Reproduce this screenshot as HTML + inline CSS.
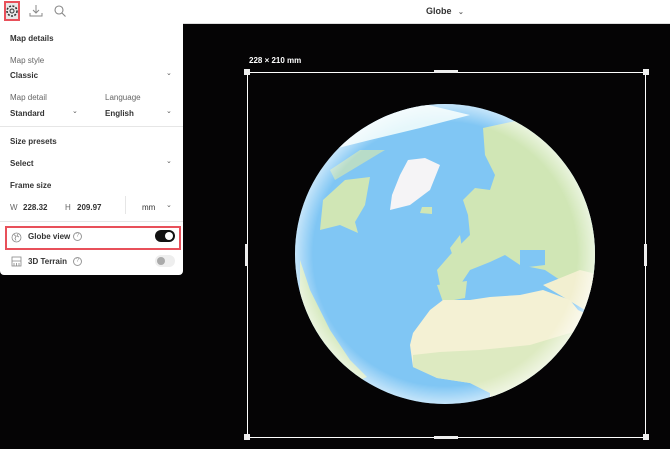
<!DOCTYPE html>
<html><head><style>
body{margin:0;width:670px;height:449px;overflow:hidden;background:#050405;font-family:"Liberation Sans",sans-serif;position:relative}
.top{position:absolute;left:0;top:0;width:670px;height:23px;background:#fff;border-bottom:1px solid #ddd}
.panel{position:absolute;left:0;top:23px;width:183px;height:252px;background:#fff;border-radius:0 0 4px 4px;font-size:8px;color:#333}
.panel div{position:absolute}
.lbl{color:#666}
.b{font-weight:bold;color:#333}
.chev{color:#555;font-size:7px}
.hr{height:1px;background:#e6e6e6;left:0;width:183px}
</style></head><body>
<div class="top">
 <div style="position:absolute;left:4px;top:1px;width:16px;height:20px;background:#e8e8e8;border:2px solid #e8505a;box-sizing:border-box"></div>
 <svg style="position:absolute;left:5px;top:4px" width="14" height="14" viewBox="0 0 14 14"><circle cx="7" cy="7" r="2" fill="none" stroke="#333" stroke-width="1"/><circle cx="7" cy="7" r="5" fill="none" stroke="#333" stroke-width="1.6" stroke-dasharray="2 1.4"/></svg>
 <svg style="position:absolute;left:29px;top:4px" width="14" height="14" viewBox="0 0 14 14" fill="none" stroke="#888" stroke-width="1"><path d="M7 1v8M4 6l3 3 3-3M1 9v3h12V9"/></svg>
 <svg style="position:absolute;left:53px;top:4px" width="14" height="14" viewBox="0 0 14 14" fill="none" stroke="#888" stroke-width="1.1"><circle cx="6" cy="6" r="4"/><path d="M9 9l3.5 3.5"/></svg>
 <div style="position:absolute;left:426px;top:6px;font-size:9px;font-weight:bold;color:#333">Globe <span style="font-size:7px;color:#666;margin-left:4px">⌄</span></div>
</div>
<div class="panel">
 <div class="b" style="left:10px;top:11px">Map details</div>
 <div class="lbl" style="left:10px;top:33px">Map style</div>
 <div class="b" style="left:10px;top:48px">Classic</div><div class="chev" style="left:166px;top:46px">⌄</div>
 <div class="lbl" style="left:10px;top:70px">Map detail</div>
 <div class="lbl" style="left:105px;top:70px">Language</div>
 <div class="b" style="left:10px;top:86px">Standard</div><div class="chev" style="left:72px;top:84px">⌄</div>
 <div class="b" style="left:105px;top:86px">English</div><div class="chev" style="left:166px;top:84px">⌄</div>
 <div class="hr" style="top:103px"></div>
 <div class="b" style="left:10px;top:114px">Size presets</div>
 <div class="b" style="left:10px;top:136px">Select</div><div class="chev" style="left:166px;top:134px">⌄</div>
 <div class="b" style="left:10px;top:158px">Frame size</div>
 <div class="lbl" style="left:10px;top:180px">W</div><div class="b" style="left:23px;top:180px">228.32</div>
 <div class="lbl" style="left:65px;top:180px">H</div><div class="b" style="left:77px;top:180px">209.97</div>
 <div style="left:125px;top:173px;width:1px;height:18px;background:#e6e6e6"></div>
 <div class="b" style="left:142px;top:180px;font-weight:normal">mm</div><div class="chev" style="left:166px;top:178px">⌄</div>
 <div class="hr" style="top:198px"></div>
 <div style="left:5px;top:203px;width:176px;height:24px;border:2px solid #e8505a;box-sizing:border-box"></div>
 <svg style="position:absolute;left:11px;top:209px" width="11" height="11" viewBox="0 0 11 11" fill="none" stroke="#888" stroke-width=".8"><circle cx="5.5" cy="5.5" r="4.5"/><path d="M3 2.5l2 2-1 2 1 2M7 2l-1 2 2 1"/></svg>
 <div class="b" style="left:28px;top:209px">Globe view</div>
 <div style="left:73px;top:209px;width:7px;height:7px;border:1px solid #999;border-radius:50%;font-size:6px;color:#999;text-align:center;line-height:7px">?</div>
 <div style="left:155px;top:207px;width:20px;height:12px;background:#111;border-radius:6px"><div style="left:10px;top:2px;width:8px;height:8px;border-radius:50%;background:#fff"></div></div>
 <svg style="position:absolute;left:11px;top:233px" width="11" height="11" viewBox="0 0 11 11" fill="none" stroke="#888" stroke-width=".8"><rect x="1" y="1" width="9" height="9"/><path d="M1 5h9M3 7v3M5.5 7v3M8 7v3"/></svg>
 <div class="b" style="left:28px;top:234px">3D Terrain</div>
 <div style="left:73px;top:234px;width:7px;height:7px;border:1px solid #999;border-radius:50%;font-size:6px;color:#999;text-align:center;line-height:7px">?</div>
 <div style="left:155px;top:232px;width:20px;height:12px;background:#eee;border-radius:6px"><div style="left:2px;top:2px;width:8px;height:8px;border-radius:50%;background:#aaa"></div></div>
</div>
<div style="position:absolute;left:249px;top:56px;font-size:8px;font-weight:bold;color:#fff">228 × 210 mm</div>
<svg style="position:absolute;left:0;top:0" width="670" height="449">
 <defs><clipPath id="c"><circle cx="445" cy="254" r="150"/></clipPath>
 <radialGradient id="rim" cx="445" cy="254" r="150" gradientUnits="userSpaceOnUse"><stop offset=".88" stop-color="#fff" stop-opacity="0"/><stop offset="1" stop-color="#fff" stop-opacity=".55"/></radialGradient></defs>
 <circle cx="445" cy="254" r="150" fill="#80c6f4"/>
 <g clip-path="url(#c)">
  <path d="M340 108 L420 103 L470 115 L420 128 L370 140 L330 150 Z" fill="#e6f7fb"/>
  <path d="M483 128 L520 120 L580 150 L600 200 L600 290 L580 295 L560 280 L545 270 L520 265 L505 255 L490 262 L470 270 L460 285 L440 285 L437 270 L450 255 L460 245 L470 235 L468 215 L463 200 L475 188 L490 190 L495 175 L485 155 Z" fill="#d0e6b5"/>
  <path d="M520 250 L545 250 L545 265 L520 268 Z" fill="#80c6f4"/>
  <path d="M437 285 L467 281 L465 298 L443 302 Z" fill="#d0e6b5"/>
  <path d="M450 248 L460 235 L463 255 L455 262 Z" fill="#d0e6b5"/>
  <path d="M543 285 L580 270 L600 275 L600 320 L585 310 Z" fill="#f2efd0"/>
  <path d="M413 333 L430 310 L443 300 L470 300 L490 297 L520 295 L543 290 L570 300 L578 310 L600 320 L600 420 L490 420 L490 393 L470 383 L437 378 L413 367 L410 345 Z" fill="#f4f1d4"/>
  <path d="M413 355 L440 352 L480 350 L530 345 L580 330 L600 330 L600 420 L500 420 L490 393 L470 383 L437 378 L413 367 Z" fill="#d7e8bb" opacity=".8"/>
  <path d="M300 260 L310 290 L330 330 L350 360 L367 377 L360 380 L330 360 L300 320 Z" fill="#d0e6b5"/>
  <path d="M323 200 L345 180 L370 177 L365 205 L355 222 L358 233 L340 225 L320 230 Z" fill="#d0e6b5"/>
  <path d="M330 170 L360 150 L385 150 L360 165 L335 180 Z" fill="#d0e6b5" opacity=".7"/>
  <path d="M408 160 L425 158 L440 165 L430 190 L410 205 L390 210 L392 195 L400 175 Z" fill="#f5f4f6"/>
  <path d="M422 207 L432 207 L432 214 L420 213 Z" fill="#d0e6b5"/>
 </g>
 <circle cx="445" cy="254" r="150" fill="url(#rim)"/>
 <rect x="247.5" y="72.5" width="398" height="365" fill="none" stroke="#fff" stroke-width="1"/>
 <g fill="#eee"><rect x="244" y="69" width="6" height="6"/><rect x="643" y="69" width="6" height="6"/><rect x="244" y="434" width="6" height="6"/><rect x="643" y="434" width="6" height="6"/>
 <rect x="434" y="70" width="24" height="3"/><rect x="434" y="436" width="24" height="3"/><rect x="245" y="244" width="3" height="22"/><rect x="644" y="244" width="3" height="22"/></g>
</svg>
</body></html>
